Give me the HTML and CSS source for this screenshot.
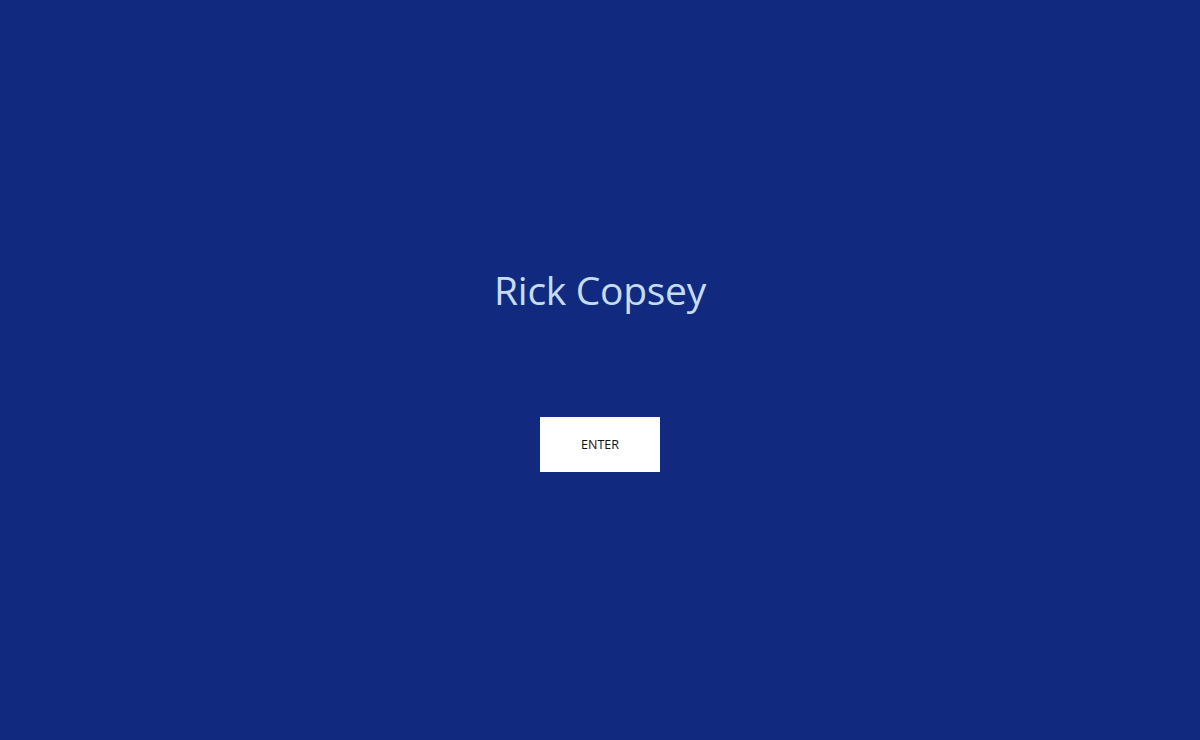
FILE: index.html
```html
<!DOCTYPE html>
<html>
<head>
<meta charset="utf-8">
<link rel="stylesheet" href="styles.css">
</head>
<body>
<main class="page">
  <h1 class="title">Rick Copsey</h1>
  <button class="enter">ENTER</button>
</main>
</body>
</html>
```
FILE: styles.css
```css
html, body {
  margin: 0;
  padding: 0;
  height: 100%;
  background: #112a80;
}
.page {
  height: 740px;
  display: flex;
  flex-direction: column;
  align-items: center;
  font-family: "Open Sans", "Noto Sans", sans-serif;
}
.title {
  margin: 262px 0 0 0;
  font-weight: 400;
  font-size: 39px;
  line-height: 56px;
  color: #c4dcee;
  letter-spacing: -0.3px;
}
.enter {
  margin-top: 99px;
  width: 120px;
  height: 55px;
  border: none;
  background: #ffffff;
  color: #111111;
  font-family: "Open Sans", "Noto Sans", sans-serif;
  font-size: 12.5px;
  padding: 0;
}
```
